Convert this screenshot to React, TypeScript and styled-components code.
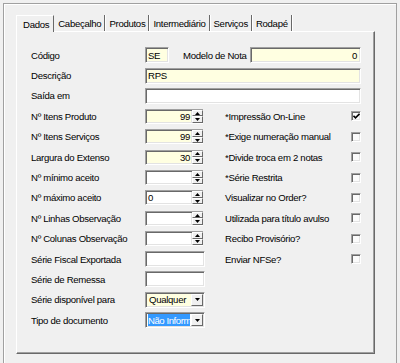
import React from "react";
import styled, { createGlobalStyle } from "styled-components";

type Fill = "yellow" | "white";

interface Field {
  label: string;
  kind: "spin" | "edit" | "combo";
  value?: string;
  fill?: Fill;
  align?: "left" | "right";
  selected?: boolean;
}

interface Option {
  label: string;
  checked?: boolean;
}

const tabs = ["Dados", "Cabeçalho", "Produtos", "Intermediário", "Serviços", "Rodapé"];

const fields: Field[] = [
  { label: "Nº Itens Produto", kind: "spin", value: "99", fill: "yellow", align: "right" },
  { label: "Nº Itens Serviços", kind: "spin", value: "99", fill: "yellow", align: "right" },
  { label: "Largura do Extenso", kind: "spin", value: "30", fill: "yellow", align: "right" },
  { label: "Nº mínimo aceito", kind: "spin" },
  { label: "Nº máximo aceito", kind: "spin", value: "0" },
  { label: "Nº Linhas Observação", kind: "spin" },
  { label: "Nº Colunas Observação", kind: "spin" },
  { label: "Série Fiscal Exportada", kind: "edit" },
  { label: "Série de Remessa", kind: "edit" },
  { label: "Série disponível para", kind: "combo", value: "Qualquer", fill: "yellow" },
  { label: "Tipo de documento", kind: "combo", value: "Não Inform", selected: true },
];

const options: Option[] = [
  { label: "*Impressão On-Line", checked: true },
  { label: "*Exige numeração manual" },
  { label: "*Divide troca em 2 notas" },
  { label: "*Série Restrita" },
  { label: "Visualizar no Order?" },
  { label: "Utilizada para título avulso" },
  { label: "Recibo Provisório?" },
  { label: "Enviar NFSe?" },
];

const GlobalStyle = createGlobalStyle`
  html, body {
    margin: 0;
    background: #f0f0f0;
  }
  body {
    font-family: "Liberation Sans", Arial, sans-serif;
    font-size: 9.6px;
    letter-spacing: -0.3px;
    color: #000;
  }
`;

const Frame = styled.div`
  margin: 3px 3px 0;
  height: 360px;
  box-sizing: border-box;
  border: 1px solid #a0a0a0;
  border-bottom: none;
  box-shadow: inset 1px 1px 0 #fff;
  padding: 11px 21px 0 12px;
`;

const TabStrip = styled.div`
  display: flex;
  height: 16px;
  position: relative;
  z-index: 1;
`;

const Tab = styled.div<{ $active?: boolean }>`
  display: flex;
  align-items: center;
  padding: ${(p) => (p.$active ? "0 4px 0 6px" : "0 3px")};
  margin-left: 1px;
  border-right: 1px solid #696969;
  box-shadow: 1px 0 0 #fff;
  white-space: nowrap;
  ${(p) =>
    p.$active &&
    `
    margin-left: 0;
    height: 17px;
    box-sizing: border-box;
    border-left: 1px solid #fff;
    border-top: 1px solid #fff;
    background: #f0f0f0;
    box-shadow: none;
  `}
`;

const Page = styled.div`
  height: 323px;
  box-sizing: border-box;
  border-top: 1px solid #fff;
  border-left: 1px solid #fff;
  border-right: 1px solid #696969;
  border-bottom: 1px solid #696969;
  box-shadow: inset -1px -1px 0 #a0a0a0;
  padding: 13px 0 0 14px;
`;

const Form = styled.div`
  display: grid;
  grid-template-columns: 114px 80px 124px 12px;
  grid-auto-rows: 20.4px;
  align-items: center;
`;

const Label = styled.div`
  grid-column: 1;
  white-space: nowrap;
`;

const Cell = styled.div<{ $span?: boolean }>`
  grid-column: ${(p) => (p.$span ? "2 / 5" : "2")};
  display: flex;
  align-items: center;
`;

const OptionLabel = styled.div`
  grid-column: 3;
  white-space: nowrap;
`;

const CheckCell = styled.div`
  grid-column: 4;
  display: flex;
  justify-content: flex-end;
`;

const Edit = styled.div<{ $fill?: Fill; $align?: "left" | "right"; $width?: number }>`
  height: 16px;
  box-sizing: border-box;
  ${(p) => (p.$width ? `width: ${p.$width}px;` : "flex: 1;")}
  background: ${(p) => (p.$fill === "yellow" ? "#ffffe1" : "#fff")};
  border-top: 1px solid #a0a0a0;
  border-left: 1px solid #a0a0a0;
  border-right: 1px solid #fff;
  border-bottom: 1px solid #fff;
  box-shadow: inset 1px 1px 0 #696969, inset -1px -1px 0 #e3e3e3;
  padding: 0 3px 0 2px;
  display: flex;
  align-items: center;
  justify-content: ${(p) => (p.$align === "right" ? "flex-end" : "flex-start")};
  white-space: nowrap;
  overflow: hidden;
`;

const InlineLabel = styled.span`
  margin: 0 3px 0 14px;
  white-space: nowrap;
`;

const Spin = styled.div`
  display: flex;
  width: 58px;
  height: 15px;
`;

const SpinField = styled(Edit)`
  height: 15px;
  border-right: none;
  padding-right: 2px;
`;

const SpinButtons = styled.div`
  display: flex;
  flex-direction: column;
  width: 11px;
  border-top: 1px solid #a0a0a0;
  border-bottom: 1px solid #fff;
  box-sizing: border-box;
`;

const SpinButton = styled.div`
  flex: 1;
  background: #f0f0f0;
  border-top: 1px solid #fff;
  border-left: 1px solid #fff;
  border-right: 1px solid #696969;
  border-bottom: 1px solid #696969;
  display: flex;
  align-items: center;
  justify-content: center;
`;

const Combo = styled(Edit)`
  width: 60px;
  flex: none;
  padding: 1px 1px 1px 2px;
`;

const ComboText = styled.div<{ $selected?: boolean }>`
  flex: 1;
  min-width: 0;
  height: 100%;
  display: flex;
  align-items: center;
  white-space: nowrap;
  padding-left: ${(p) => (p.$selected ? "0" : "1px")};
  letter-spacing: ${(p) => (p.$selected ? "-0.45px" : "inherit")};
  background: ${(p) => (p.$selected ? "#3399ff" : "transparent")};
  color: ${(p) => (p.$selected ? "#fff" : "#000")};
`;

const DropButton = styled.div`
  width: 12px;
  height: 100%;
  box-sizing: border-box;
  margin-left: 1px;
  background: #f0f0f0;
  border-top: 1px solid #fff;
  border-left: 1px solid #fff;
  border-right: 1px solid #696969;
  border-bottom: 1px solid #696969;
  display: flex;
  align-items: center;
  justify-content: center;
`;

const CheckBox = styled.div`
  width: 10px;
  height: 10px;
  box-sizing: border-box;
  background: #fbfbfb;
  border-top: 1px solid #a0a0a0;
  border-left: 1px solid #a0a0a0;
  border-right: 1px solid #fff;
  border-bottom: 1px solid #fff;
  box-shadow: inset 1px 1px 0 #696969, inset -1px -1px 0 #e3e3e3;
  display: flex;
  align-items: center;
  justify-content: center;
`;

const Arrow: React.FC<{ up?: boolean }> = ({ up }) => (
  <svg width="5" height="3" viewBox="0 0 5 3">
    <path d={up ? "M2.5 0 L5 3 L0 3 Z" : "M0 0 L5 0 L2.5 3 Z"} fill="#000" />
  </svg>
);

const Check = () => (
  <svg width="7" height="6" viewBox="0 0 7 6">
    <path d="M0.5 2.8 L2.5 4.8 L6.5 0.8" stroke="#000" strokeWidth="1.6" fill="none" />
  </svg>
);

const Control: React.FC<{ field: Field }> = ({ field }) => {
  if (field.kind === "spin") {
    return (
      <Spin>
        <SpinField $fill={field.fill} $align={field.align}>
          {field.value}
        </SpinField>
        <SpinButtons>
          <SpinButton>
            <Arrow up />
          </SpinButton>
          <SpinButton>
            <Arrow />
          </SpinButton>
        </SpinButtons>
      </Spin>
    );
  }
  if (field.kind === "combo") {
    return (
      <Combo $fill={field.fill}>
        <ComboText $selected={field.selected}>{field.value}</ComboText>
        <DropButton>
          <Arrow />
        </DropButton>
      </Combo>
    );
  }
  return <Edit $width={60} />;
};

export default function App() {
  return (
    <>
      <GlobalStyle />
      <Frame>
        <TabStrip>
          {tabs.map((t, i) => (
            <Tab key={t} $active={i === 0}>
              {t}
            </Tab>
          ))}
        </TabStrip>
        <Page>
          <Form>
            <Label>Código</Label>
            <Cell $span>
              <Edit $fill="yellow" $width={24}>
                SE
              </Edit>
              <InlineLabel>Modelo de Nota</InlineLabel>
              <Edit $fill="yellow" $align="right">
                0
              </Edit>
            </Cell>
            <Label>Descrição</Label>
            <Cell $span>
              <Edit $fill="yellow">RPS</Edit>
            </Cell>
            <Label>Saída em</Label>
            <Cell $span>
              <Edit />
            </Cell>
            {fields.map((f, i) => (
              <React.Fragment key={f.label}>
                <Label>{f.label}</Label>
                <Cell>
                  <Control field={f} />
                </Cell>
                {options[i] && (
                  <>
                    <OptionLabel>{options[i].label}</OptionLabel>
                    <CheckCell>
                      <CheckBox>{options[i].checked && <Check />}</CheckBox>
                    </CheckCell>
                  </>
                )}
              </React.Fragment>
            ))}
          </Form>
        </Page>
      </Frame>
    </>
  );
}
